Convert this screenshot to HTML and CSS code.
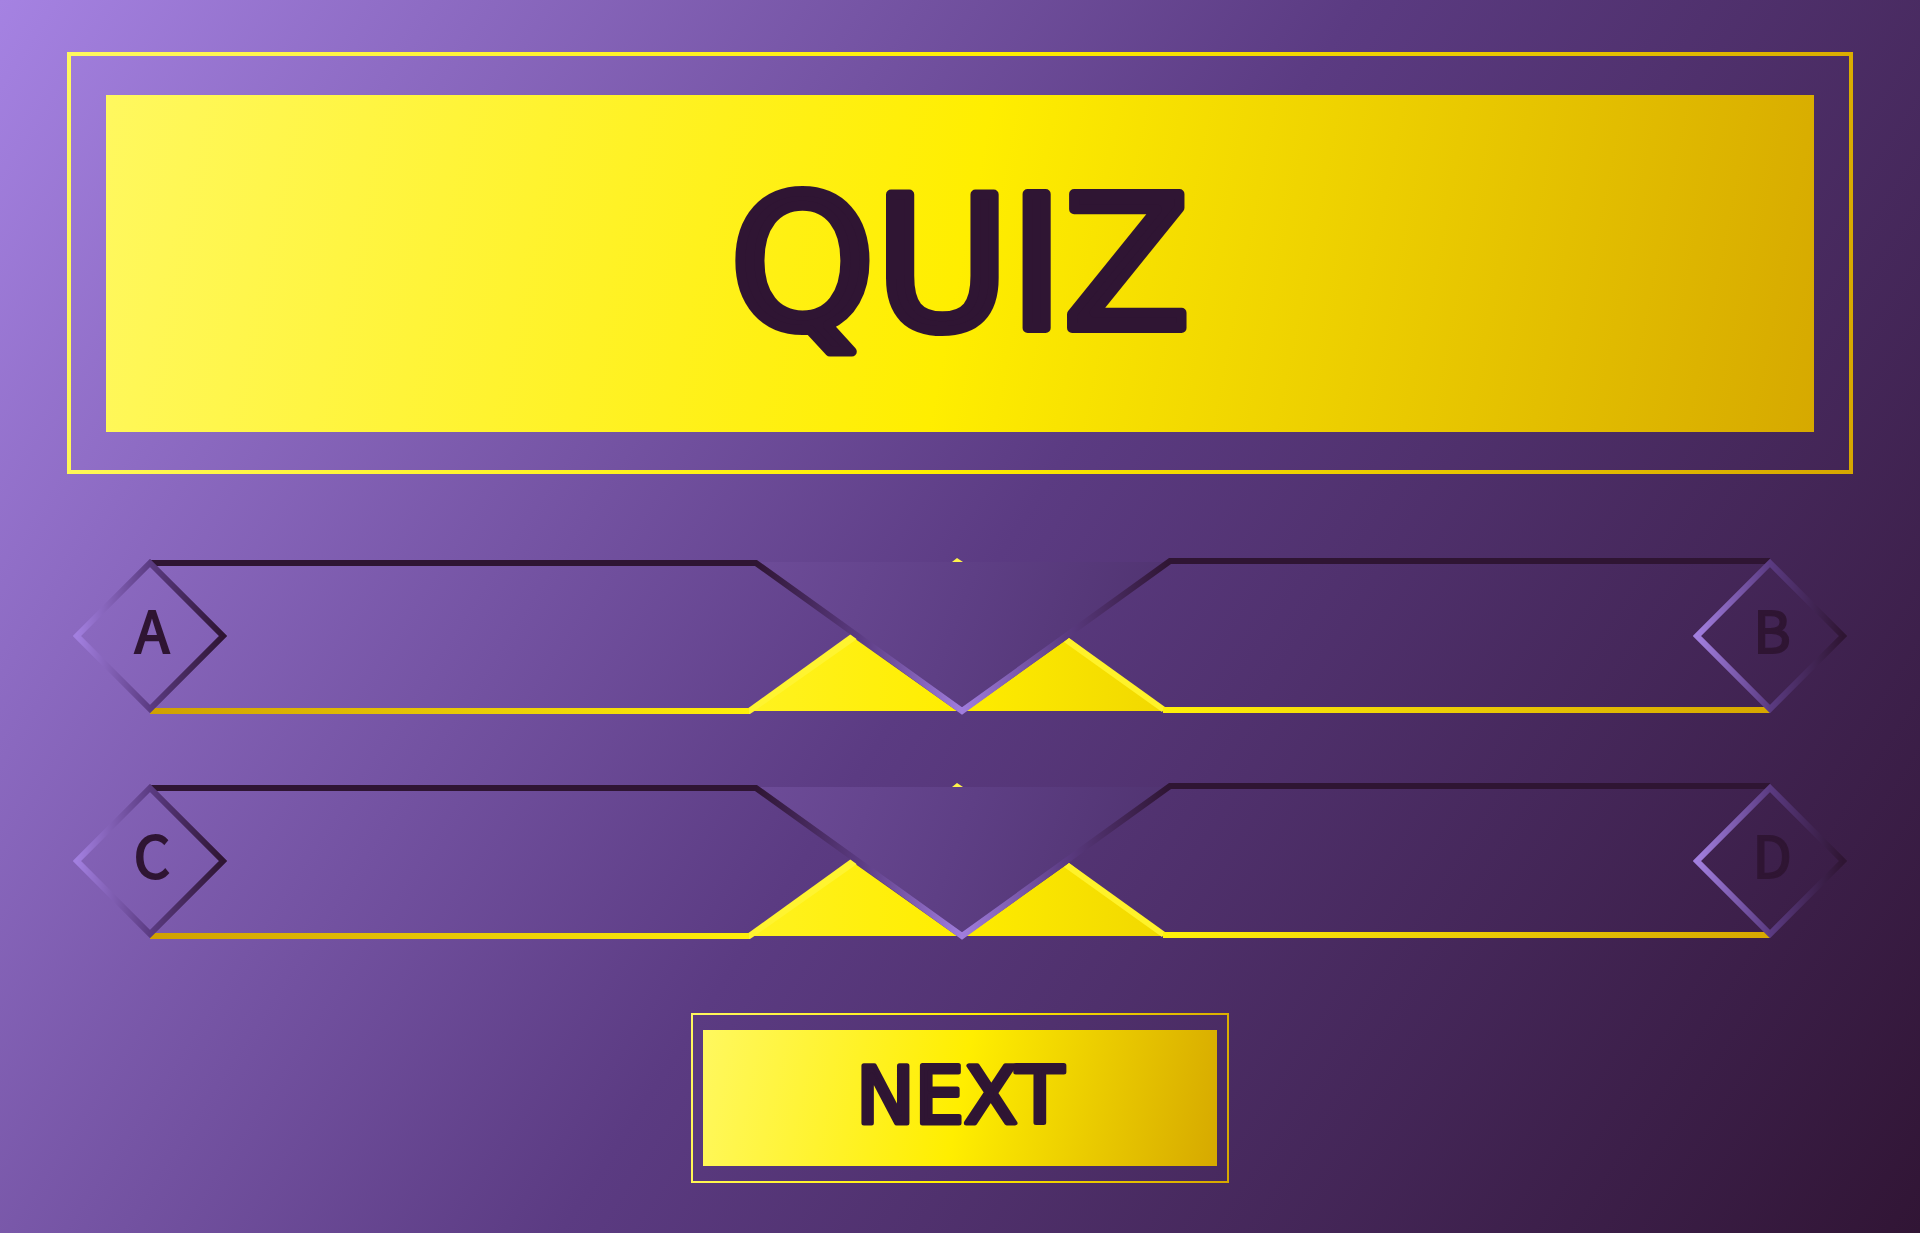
FILE: index.html
```
<!DOCTYPE html>
<html lang="en">
	<head>
		<meta charset="UTF-8">
		<title>Quiz</title>
		<link rel="stylesheet" href="styles.css">
	</head>
	<body>
		<!-- gradients shared by both rows -->
		<svg class="defs" width="0" height="0" aria-hidden="true">
			<defs>
				<linearGradient id="goldLeft" gradientUnits="userSpaceOnUse" x1="77" y1="0" x2="676" y2="0">
					<stop offset="0" stop-color="#d0a000"/>
					<stop offset="1" stop-color="#fff00a"/>
				</linearGradient>
				<linearGradient id="goldRight" gradientUnits="userSpaceOnUse" x1="1090" y1="0" x2="1697" y2="0">
					<stop offset="0" stop-color="#fff00a"/>
					<stop offset="1" stop-color="#d6a700"/>
				</linearGradient>
				<linearGradient id="peaks" gradientUnits="userSpaceOnUse" x1="676" y1="0" x2="1092" y2="0">
					<stop offset="0" stop-color="#fff220"/>
					<stop offset="0.5" stop-color="#ffed00"/>
					<stop offset="1" stop-color="#f1d800"/>
				</linearGradient>
				<linearGradient id="arms" gradientUnits="userSpaceOnUse" x1="683" y1="0" x2="1095" y2="0">
					<stop offset="0" stop-color="#2f1533"/>
					<stop offset="0.25" stop-color="#5b3b82"/>
					<stop offset="0.5" stop-color="#a07ddd"/>
					<stop offset="0.75" stop-color="#5b3b82"/>
					<stop offset="1" stop-color="#2f1533"/>
				</linearGradient>
				<linearGradient id="wedge" gradientUnits="userSpaceOnUse" x1="700" y1="0" x2="1060" y2="140">
					<stop offset="0" stop-color="#6c4b97"/>
					<stop offset="0.5" stop-color="#5e3f85"/>
					<stop offset="1" stop-color="#503370"/>
				</linearGradient>
				<linearGradient id="diamond" x1="0" y1="0" x2="1" y2="0">
					<stop offset="0" stop-color="#a27fdf"/>
					<stop offset="0.5" stop-color="#5b3b82"/>
					<stop offset="1" stop-color="#2f1533"/>
				</linearGradient>
				<g id="rail">
					<polygon points="686,4 1095,4 889,150" fill="url(#wedge)"/>
					<polygon points="879,4 884,0 890,4" fill="#fff44a"/>
					<polygon points="676,153 778,78 884,153" fill="url(#peaks)"/>
					<polygon points="893,153 996,80 1092,153" fill="url(#peaks)"/>
					<polygon points="674,151 778,76 784,81 680,154 677,156 672,156" fill="#fff430"/>
					<polygon points="996,80 991,84 1089,154 1092,149" fill="#fff22a"/>
					<path d="M77 153H676" stroke="url(#goldLeft)"/>
					<path d="M1090 152H1697" stroke="url(#goldRight)"/>
					<path d="M77 5H683L889 153L1097 3H1697" stroke="url(#arms)"/>
				</g>
			</defs>
		</svg>

		<div class="frame banner">
			<h1 class="panel">
				<svg class="word"><text x="50%" y="233">QUIZ</text></svg>
			</h1>
		</div>

		<div class="answers">
			<div class="row">
				<svg class="rail" viewBox="0 0 1774 156" aria-hidden="true"><use href="#rail"/></svg>
				<button class="answer" type="button">
					<svg viewBox="0 0 154 154" aria-hidden="true"><path d="M77 4L150 77L77 150L4 77Z"/></svg>
					<span>A</span>
				</button>
				<button class="answer" type="button">
					<svg viewBox="0 0 154 154" aria-hidden="true"><path d="M77 4L150 77L77 150L4 77Z"/></svg>
					<span>B</span>
				</button>
			</div>
			<div class="row">
				<svg class="rail" viewBox="0 0 1774 156" aria-hidden="true"><use href="#rail"/></svg>
				<button class="answer" type="button">
					<svg viewBox="0 0 154 154" aria-hidden="true"><path d="M77 4L150 77L77 150L4 77Z"/></svg>
					<span>C</span>
				</button>
				<button class="answer" type="button">
					<svg viewBox="0 0 154 154" aria-hidden="true"><path d="M77 4L150 77L77 150L4 77Z"/></svg>
					<span>D</span>
				</button>
			</div>
		</div>

		<button class="frame next" type="button">
			<span class="panel">
				<svg class="word"><text x="50%" y="93">NEXT</text></svg>
			</span>
		</button>
	</body>
</html>
```
FILE: styles.css
```
*{
	padding:0;
	margin:0;
	box-sizing:border-box;
}
body{
	min-height:100vh;
	padding:52px 67px 50px;
	display:flex;
	flex-direction:column;
	background:linear-gradient(123deg,#a582e2,#5b3b82 50%,#311535);
	font-family:"DejaVu Sans",Verdana,sans-serif;
	color:#2f1533;
}
button{
	background:none;
	border:0;
	color:inherit;
	font-family:inherit;
	cursor:pointer;
}
.defs{
	position:absolute;
}

/* gold frame with a filled panel inside */
.frame{
	border:4px solid;
	border-image:linear-gradient(101deg,#fff85f,#ffee00 50%,#d6a700) 1;
}
.panel{
	display:block;
	background:linear-gradient(101deg,#fff85f,#ffee00 50%,#d6a900);
}
.banner{
	padding:39px 35px 38px;
}
.banner .panel{
	height:337px;
}
.word{
	display:block;
	width:100%;
	height:100%;
}
.word text{
	font-weight:400;
	font-size:184px;
	text-anchor:middle;
	fill:#2f1533;
	stroke:#2f1533;
	stroke-width:10px;
	stroke-linejoin:round;
}

.answers{
	margin:84px 6px 74px;
	display:flex;
	flex-direction:column;
	gap:69px;
}
.row{
	position:relative;
	display:flex;
	justify-content:space-between;
	align-items:center;
}
.rail{
	position:absolute;
	left:0;
	width:100%;
	overflow:visible;
	fill:none;
	stroke-width:6px;
}
#rail polygon{
	stroke:none;
}
.answer{
	position:relative;
	width:154px;
	height:156px;
	padding:0 0 17px 4px;
	font-family:"Noto Sans CJK SC",sans-serif;
	font-weight:400;
	font-size:57px;
	line-height:60px;
	-webkit-text-stroke:2px #2f1533;
}
.answer svg{
	position:absolute;
	top:1px;
	left:0;
	width:154px;
	height:154px;
	fill:none;
	stroke:url(#diamond);
	stroke-width:6px;
}

.next{
	align-self:center;
	width:538px;
	padding:15px 10px;
	border-width:2px;
}
.next .panel{
	height:136px;
}
.next text{
	font-size:78px;
	stroke-width:5px;
}
```
